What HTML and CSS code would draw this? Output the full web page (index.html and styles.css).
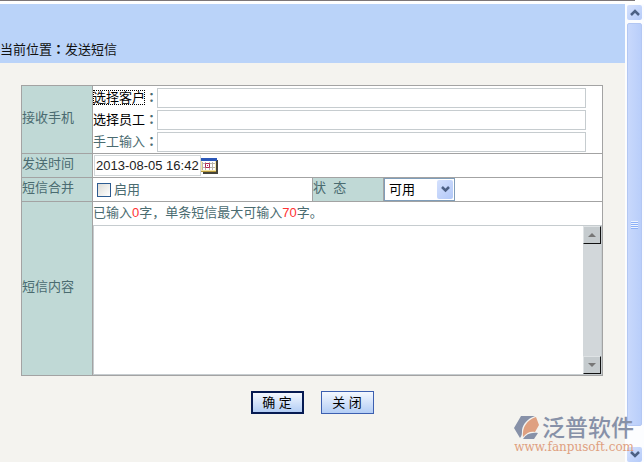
FILE: index.html
```html
<!DOCTYPE html>
<html lang="zh-CN">
<head>
    <meta charset="UTF-8">
    <meta name="viewport" content="width=device-width, initial-scale=1.0">
    <title>发送短信</title>
    <link rel="stylesheet" href="styles.css">
</head>
<body>
    <div class="top-line"></div>
    <div class="window">
        <div class="page">
            <header class="location">当前位置<span class="colon" lang="zh-TW">：</span>发送短信</header>

            <form class="sms-form">
                <table class="form-table">
                    <colgroup>
                        <col class="col-label">
                        <col class="col-wide">
                        <col class="col-label">
                        <col>
                    </colgroup>
                    <tr class="row-phones">
                        <th>接收手机</th>
                        <td colspan="3">
                            <div class="phone-line">
                                <label for="customer"><a class="picker focused" href="#">选择客户</a><span class="colon" lang="zh-TW">：</span></label>
                                <input type="text" id="customer">
                            </div>
                            <div class="phone-line">
                                <label for="staff"><a class="picker" href="#">选择员工</a><span class="colon" lang="zh-TW">：</span></label>
                                <input type="text" id="staff">
                            </div>
                            <div class="phone-line">
                                <label for="manual">手工输入<span class="colon" lang="zh-TW">：</span></label>
                                <input type="text" id="manual">
                            </div>
                        </td>
                    </tr>
                    <tr class="row-short">
                        <th><label for="sendTime">发送时间</label></th>
                        <td colspan="3">
                            <div class="date-line">
                                <input type="text" id="sendTime" value="2013-08-05 16:42">
                                <button type="button" class="calendar" aria-label="选择日期">
                                    <svg width="17" height="16" viewBox="0 0 17 16">
                                        <path d="M2 2h15v14H2z" fill="#45443a"/>
                                        <path d="M0 1h15v13H0z" fill="#f6e6a6"/>
                                        <path d="M0 0h16v3H0z" fill="#2b57b8"/>
                                        <path d="M1 3h13v9H1z" fill="#fff"/>
                                        <path d="M1.500 4v8M4.500 4v8M8.500 4v8M11.500 4v8M1 5.500h13M1 9.500h13" stroke="#b9b5aa" fill="none"/>
                                        <path d="M4.500 5.500h4v4h-4z" stroke="#b42855" fill="#fff"/>
                                        <path d="M6 7h1v1H6z" fill="#b42855"/>
                                        <path d="M0 13h15v1H0z" fill="#b99a3b"/>
                                    </svg>
                                </button>
                            </div>
                        </td>
                    </tr>
                    <tr class="row-short">
                        <th>短信合并</th>
                        <td>
                            <label class="check-line"><input type="checkbox" id="merge">启用</label>
                        </td>
                        <th><label for="state">状&nbsp; 态</label></th>
                        <td>
                            <div class="select-box">
                                <select id="state">
                                    <option>可用</option>
                                    <option>禁用</option>
                                </select>
                                <span class="select-arrow">
                                    <svg width="9" height="7" viewBox="0 0 9 7"><path d="M1 1l3.500 3.500L8 1" stroke="#4d6185" stroke-width="2.500" fill="none"/></svg>
                                </span>
                            </div>
                        </td>
                    </tr>
                    <tr>
                        <th><label for="content">短信内容</label></th>
                        <td colspan="3">
                            <p class="counter">已输入<span>0</span>字，单条短信最大可输入<span>70</span>字。</p>
                            <div class="editor">
                                <textarea id="content"></textarea>
                                <div class="classic-scroll">
                                    <button type="button" aria-label="上"><svg width="8" height="4" viewBox="0 0 8 4"><path d="M0 4l4-4 4 4z" fill="#777"/></svg></button>
                                    <button type="button" aria-label="下"><svg width="8" height="4" viewBox="0 0 8 4"><path d="M0 0l4 4 4-4z" fill="#777"/></svg></button>
                                </div>
                            </div>
                        </td>
                    </tr>
                </table>

                <div class="actions">
                    <button type="submit" class="btn btn-default">确 定</button>
                    <button type="button" class="btn">关 闭</button>
                </div>
            </form>
        </div>

        <div class="page-scroll">
            <button type="button" class="scroll-btn" aria-label="向上滚动">
                <svg width="10" height="7" viewBox="0 0 10 7"><path d="M1 6l4-4 4 4" stroke="#4d6185" stroke-width="2.500" fill="none"/></svg>
            </button>
            <div class="thumb"><span class="grip"></span></div>
            <button type="button" class="scroll-btn" aria-label="向下滚动">
                <svg width="10" height="7" viewBox="0 0 10 7"><path d="M1 1l4 4 4-4" stroke="#4d6185" stroke-width="2.500" fill="none"/></svg>
            </button>
        </div>
    </div>

    <div class="watermark">
        <div class="brand">
            <svg width="26" height="24" viewBox="0 0 26 24">
                <path d="M7 0h14C13 3 9 8 8 14c0 3 0 6-2 8L0 12z" fill="#8791a8"/>
                <path d="M22 1l3 8-4 7c-4-1-8 0-12 5C8 11 13 4 22 1z" fill="#dfa080"/>
                <path d="M24 17l-4 6H9c3-5 8-7 15-6z" fill="#8791a8"/>
            </svg>
            <span>泛普软件</span>
        </div>
        <div class="site">www.fanpusoft.com</div>
    </div>
</body>
</html>
```

FILE: styles.css
```css
* {
    box-sizing: border-box;
    margin: 0;
    padding: 0;
}
body {
    display: flex;
    flex-direction: column;
    min-height: 100vh;
    font-family: "Liberation Sans", "Noto Sans CJK SC", sans-serif;
    font-size: 13px;
    line-height: 18px;
    color: #4a6b70;
    background: #fff;
}
button, input, select, textarea {
    font: inherit;
}
.top-line {
    height: 1px;
    margin-right: 9px;
    background: #7c7678;
}
.window {
    flex: 1;
    display: flex;
    margin-top: 3px;
}
.page {
    flex: 1;
    background: #f4f3ef;
}
.location {
    padding: 37px 0 4px;
    color: #111;
    background: #bad3f9;
}
.colon {
    font-family: "Noto Sans CJK TC", sans-serif;
    font-weight: bold;
    line-height: 1;
}
.sms-form {
    padding: 22px 22px 22px 21px;
}

/* form table */
.form-table {
    width: 100%;
    table-layout: fixed;
    border-collapse: collapse;
    background: #fff;
}
.form-table th,
.form-table td {
    border: 1px solid #a3a3a3;
    text-align: left;
    font-weight: normal;
}
.form-table th {
    padding-bottom: 3px;
    background: #c0d9d6;
}
.col-label {
    width: 71px;
}
.col-wide {
    width: 220px;
}
.row-phones {
    height: 68px;
}
.row-short {
    height: 24px;
}
.phone-line {
    display: flex;
    align-items: center;
    height: 22px;
    padding-right: 16px;
}
.phone-line label {
    width: 64px;
    white-space: nowrap;
}
.phone-line input {
    flex: 1;
    min-width: 0;
    height: 20px;
    border: 1px solid #c6cccf;
}
.picker {
    color: #000;
    text-decoration: none;
}
.focused {
    outline: 1px dotted #000;
    outline-offset: -1px;
}
.date-line {
    display: flex;
    align-items: center;
    padding-left: 1px;
}
.date-line input {
    width: 107px;
    height: 21px;
    padding-left: 1px;
    border: 1px solid #d3d8da;
    color: #222;
}
.calendar {
    display: flex;
    border: none;
    background: none;
}
.check-line {
    display: flex;
    align-items: center;
    gap: 3px;
    padding-left: 4px;
}
.check-line input {
    appearance: none;
    width: 14px;
    height: 14px;
    border: 1px solid #2c5c92;
    background: linear-gradient(135deg, #dcdcd7, #fff);
}
.select-box {
    display: grid;
    width: 71px;
}
.select-box select {
    grid-area: 1 / 1;
    height: 23px;
    padding-left: 4px;
    appearance: none;
    border: 1px solid #7f9db9;
    border-radius: 0;
    background: #fff;
    color: #000;
}
.select-arrow {
    grid-area: 1 / 1;
    justify-self: end;
    align-self: center;
    display: flex;
    align-items: center;
    justify-content: center;
    width: 16px;
    height: 19px;
    margin-right: 2px;
    border-radius: 2px;
    background: linear-gradient(135deg, #d5e1fd, #b2c8f8);
    pointer-events: none;
}
.counter {
    padding: 2px 0 3px;
}
.counter span {
    color: #f33;
}
.editor {
    display: flex;
    height: 150px;
    border: 1px solid #c6cccf;
}
.editor textarea {
    flex: 1;
    min-width: 0;
    border: none;
    resize: none;
    overflow: hidden;
}
.classic-scroll {
    display: flex;
    flex-direction: column;
    justify-content: space-between;
    width: 18px;
    background: #d2d7da;
}
.classic-scroll button {
    display: flex;
    align-items: center;
    justify-content: center;
    height: 18px;
    border: 1px solid;
    border-color: #dfe3e5 #111 #111 #dfe3e5;
    background: #c5cbce;
}

/* buttons */
.actions {
    display: flex;
    justify-content: center;
    gap: 17px;
    padding-top: 15px;
}
.btn {
    width: 53px;
    height: 23px;
    border: 1px solid #3c5fb0;
    background: linear-gradient(#f4f8ff, #b3cdf5);
    color: #000;
}
.btn-default {
    border: 2px solid #061a52;
}

/* window scrollbar */
.page-scroll {
    display: flex;
    flex-direction: column;
    width: 19px;
    padding: 1px 2px 0;
    background: #fcfdff;
}
.scroll-btn {
    display: flex;
    align-items: center;
    justify-content: center;
    height: 15px;
    border: none;
    border-radius: 2px;
    background: linear-gradient(135deg, #d5e1fd, #b5cbf9);
}
.thumb {
    flex: 1;
    display: flex;
    align-items: center;
    justify-content: center;
    margin: 3px 0 21px;
    border: 1px solid #b3c7f3;
    border-radius: 2px;
    background: linear-gradient(90deg, #c8d8fc, #b9cefa);
}
.grip {
    width: 7px;
    height: 8px;
    background: repeating-linear-gradient(#eef4fe 0 1px, #8cb0f8 1px 2px);
}

/* logo over the bottom right corner */
.watermark {
    position: absolute;
    right: 10px;
    bottom: 8px;
    color: #8791a8;
    pointer-events: none;
}
.brand {
    display: flex;
    align-items: center;
    gap: 2px;
    font-size: 23px;
    font-weight: 500;
    line-height: 24px;
}
.site {
    font-family: "DejaVu Serif", serif;
    font-size: 12px;
    line-height: 14px;
    text-align: right;
    color: #dfa080;
}
```
